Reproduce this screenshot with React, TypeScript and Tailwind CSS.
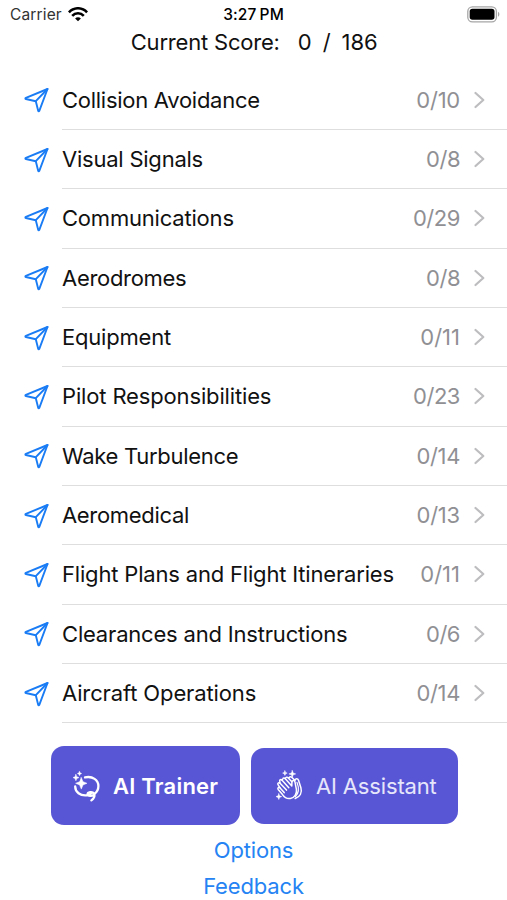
import React from "react";

type Topic = { name: string; score: string; nameClass: string; scoreClass: string };

const topics: Topic[] = [
  { name: "Collision Avoidance", score: "0/10", nameClass: "tracking-[-0.270px]", scoreClass: "tracking-[-0.250px]" },
  { name: "Visual Signals", score: "0/8", nameClass: "tracking-[-0.230px]", scoreClass: "tracking-[-0.500px]" },
  { name: "Communications", score: "0/29", nameClass: "tracking-[-0.200px]", scoreClass: "tracking-[-0.450px]" },
  { name: "Aerodromes", score: "0/8", nameClass: "tracking-[-0.300px]", scoreClass: "tracking-[-0.500px]" },
  { name: "Equipment", score: "0/11", nameClass: "tracking-[-0.200px]", scoreClass: "tracking-[0px]" },
  { name: "Pilot Responsibilities", score: "0/23", nameClass: "tracking-[-0.150px]", scoreClass: "tracking-[-0.450px]" },
  { name: "Wake Turbulence", score: "0/14", nameClass: "tracking-[-0.300px]", scoreClass: "tracking-[-0.350px]" },
  { name: "Aeromedical", score: "0/13", nameClass: "tracking-[-0.320px]", scoreClass: "tracking-[-0.200px]" },
  { name: "Flight Plans and Flight Itineraries", score: "0/11", nameClass: "tracking-[-0.180px]", scoreClass: "tracking-[0px]" },
  { name: "Clearances and Instructions", score: "0/6", nameClass: "tracking-[-0.190px]", scoreClass: "tracking-[-0.500px]" },
  { name: "Aircraft Operations", score: "0/14", nameClass: "tracking-[-0.130px]", scoreClass: "tracking-[-0.350px]" },
];

function PlaneIcon() {
  return (
    <svg className="h-[26px] w-[26px] shrink-0" viewBox="0 0 26 26" fill="none" stroke="#1a7cf5" strokeWidth="1.900" strokeLinejoin="round" strokeLinecap="round">
      <path d="M23.500 2 1.900 10.900c-.7.300-.7.900 0 1.100L11.800 14.200 14.200 23.800c.2.700.8.700 1.100 0Z" />
      <path d="M23.500 2 11.800 14.200" />
    </svg>
  );
}

function WifiIcon() {
  return (
    <svg className="h-[15px] w-[20px]" viewBox="0 0 20 15" fill="none" stroke="#000" strokeWidth="2.6">
      <path d="M.9 5.400C6-.1 14-.1 19.100 5.400" />
      <path d="M4.200 8.800C7.400 5.400 12.600 5.400 15.800 8.800" />
      <path d="M7.100 11.400C8.700 9.700 11.300 9.700 12.900 11.400L10 14.300Z" fill="#000" stroke="none" />
    </svg>
  );
}

function BatteryIcon() {
  return (
    <svg className="h-[17px] w-[33px]" viewBox="0 0 33 17">
      <rect x=".8" y=".8" width="28.600" height="15" rx="4.600" fill="#fff" stroke="#a6a6a6" strokeWidth="1.300" />
      <rect x="2.700" y="2.800" width="24.800" height="11" rx="2.700" fill="#000" />
      <path d="M31 5.800c1.800.7 1.800 4.300 0 5Z" fill="#a6a6a6" />
    </svg>
  );
}

function LassoSparklesIcon() {
  return (
    <svg className="h-[32px] w-[28px]" viewBox="0 0 28 32" fill="none" stroke="#fff" strokeWidth="2.300" strokeLinecap="round" strokeLinejoin="round">
      <path d="M12 7.400c7.600-1.700 13.400 2.700 13.400 8.600 0 3.300-1.500 6.200-4.200 8" />
      <path d="M2.200 16.500c0 5.600 5 9.500 11.600 8.800 2.100-.2 3.600-1.200 4.800-2.200" />
      <path d="M20.800 24.800c-1.600 1.300-6 1.600-6.200-.4-.2-2.300 4.900-3.300 6.400-.6 1.200 2.200-.3 5-2.600 6.600" />
      <path d="M8.300 7.600 10 11.700 14 13.300 10 14.900 8.300 19.100 6.600 14.900 2.600 13.300 6.600 11.700Z" fill="#fff" strokeWidth=".5" />
      <path d="M2.900 4.400 3.800 6.700 6 7.600 3.800 8.500 2.900 10.800 2 8.500 0 7.600 2 6.700Z" fill="#fff" strokeWidth=".5" />
      <path d="M6.500 1.300 7.200 2.800 8.700 3.500 7.200 4.200 6.500 5.700 5.800 4.200 4.300 3.500 5.800 2.800Z" fill="#fff" strokeWidth=".4" />
    </svg>
  );
}

function HandsSparklesIcon() {
  return (
    <svg className="h-[31px] w-[28px]" viewBox="0 0 28 31" fill="none" stroke="#fff" strokeWidth="1.500" strokeLinecap="round" strokeLinejoin="round">
      <path d="M6.500 24.600 2.200 19.500c-1-1.500.7-2.900 1.900-1.600L2 14.700c-.8-1.700 1.100-2.700 2.100-1.400L3.800 11.600c-.7-1.900 1.300-2.600 2.300-1.300L6.800 8.800c.5-1.200 1.800-1 2.500-.1l6.500 7.200.1-3.600c.1-2.400 2.700-2.400 3.100-.2l1.400 7.300c.7 4.300-2 8.400-6.100 9.100-3.400.6-5.600-.7-7.800-3.900Z" />
      <path d="m4.100 17.900 4.100 4.700M4.100 13.300l6.400 6.800M6.100 10.300l6.700 7.400" />
      <path d="M9.300 8.700c.3-1.600 1.900-1.900 3-.8l3.600 3.800M13 8c.6-1.600 2-1.500 3-.5l3 3c.1-2.300 2.800-2.400 3.500-.2l2.400 7.500c1.400 4.900-.9 9-5.700 10.700" />
      <path d="M21 12.400c2.100 5.500 2.500 10.200-1.600 14.300" strokeWidth="1.200" />
      <path d="M16.300.5 17.200 3 19.700 3.900 17.200 4.800 16.300 7.300 15.400 4.800 12.900 3.900 15.400 3Z" fill="#fff" strokeWidth=".5" />
      <path d="M8.900.8 9.600 2.400 11.200 3.100 9.600 3.800 8.900 5.400 8.200 3.800 6.600 3.100 8.200 2.400Z" fill="#fff" strokeWidth=".5" />
      <path d="M2.800 23.700 3.600 25.800 5.700 26.600 3.600 27.400 2.800 29.500 2 27.400 0 26.600 2 25.800Z" fill="#fff" strokeWidth=".5" />
    </svg>
  );
}

function TopicRow({ topic }: { topic: Topic }) {
  return (
    <li className="flex h-[59.350px] items-center pl-6">
      <PlaneIcon />
      <div className="ml-3 flex h-full flex-1 items-center border-b border-[#dededf] pr-[22px]">
        <span className={`whitespace-nowrap ${topic.nameClass}`}>{topic.name}</span>
        <span className={`ml-auto text-[#909094] ${topic.scoreClass}`}>{topic.score}</span>
        <svg className="ml-[14px] h-[18px] w-[11px]" viewBox="0 0 11 18" fill="none" stroke="#bdbdc0" strokeWidth="2.200" strokeLinecap="round" strokeLinejoin="round">
          <path d="m1.500 2 7.800 7-7.800 7" />
        </svg>
      </div>
    </li>
  );
}

export default function App() {
  return (
    <div className="flex h-[900px] w-[507px] flex-col overflow-hidden bg-white font-['Inter',sans-serif] text-[22px] leading-none text-[#111]">
      <header className="grid h-7 grid-cols-3 items-center pt-px text-[15.500px]">
        <div className="flex items-center gap-[6px] pl-[10px] tracking-[0.150px] text-[#333]">
          <span>Carrier</span>
          <WifiIcon />
        </div>
        <div className="text-center font-medium tracking-[0.100px] whitespace-nowrap text-black [word-spacing:-1px]">3:27 PM</div>
        <div className="flex justify-end pr-[7px]"><BatteryIcon /></div>
      </header>
      <div className="flex h-[42.500px] items-start justify-center pt-[3px] pl-[1.500px] whitespace-pre">
        <span className="tracking-[-0.200px]">Current Score:</span>
        <span className="ml-[18px]">0</span>
        <span className="ml-[11px]">/</span>
        <span className="ml-[11px]">186</span>
      </div>
      <ul>
        {topics.map((topic) => <TopicRow key={topic.name} topic={topic} />)}
      </ul>
      <div className="mt-[23px] flex h-[79px] items-center gap-[11px] pl-[51px]">
        <button className="flex h-[79px] w-[189px] items-center rounded-[13px] bg-[#5956d5] pl-[22px] font-semibold text-white">
          <LassoSparklesIcon />
          <span className="ml-[12px] tracking-[0.220px] whitespace-nowrap">AI Trainer</span>
        </button>
        <button className="flex h-[76px] w-[206.500px] items-center rounded-[13px] bg-[#5956d5] pl-[25px] text-[#e6e6fb]">
          <HandsSparklesIcon />
          <span className="ml-[12px] tracking-[-0.150px] whitespace-nowrap">AI Assistant</span>
        </button>
      </div>
      <nav className="flex flex-col items-center pt-[14px] tracking-[-0.150px] text-[#2583f3]">
        <a className="flex h-[36px] items-start">Options</a>
        <a className="flex items-start">Feedback</a>
      </nav>
    </div>
  );
}
